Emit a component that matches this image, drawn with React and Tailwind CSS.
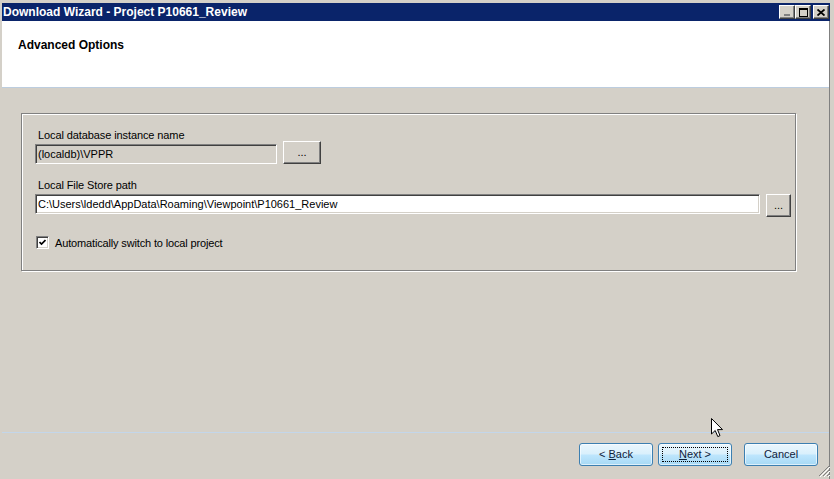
import React from "react";

const raised =
  "bg-[#d4d0c8] border border-t-white border-l-white border-b-[#404040] border-r-[#404040] shadow-[inset_-1px_-1px_0_#808080]";
const sunken =
  "border border-t-[#808080] border-l-[#808080] border-b-white border-r-white shadow-[inset_1px_1px_0_#404040,inset_-1px_-1px_0_#d4d0c8]";
const aero =
  "w-[74px] h-[23px] rounded-[3px] border border-[#3c7fb1] bg-[linear-gradient(to_bottom,#eaf6fd_0%,#d9f0fc_48%,#bee6fd_52%,#a7d9f5_100%)] shadow-[inset_0_0_0_1px_rgba(255,255,255,0.6)] flex items-center justify-center text-[11px] text-[#10213a] font-['Liberation_Sans',Arial,sans-serif]";

function TitleButton({ children, className = "" }) {
  return (
    <div className={`w-[16px] h-[14px] ${raised} flex items-center justify-center ${className}`}>
      {children}
    </div>
  );
}

export default function App() {
  return (
    <div className="w-[834px] h-[479px] bg-[#d4d0c8] relative overflow-hidden flex flex-col pt-[3px] pl-[2px] pr-[4px] font-['Liberation_Sans',Arial,sans-serif] text-black">
      {/* Title bar */}
      <div className="h-[18px] bg-[#0a246a] flex items-center justify-between pl-[1px] pr-[1px] shrink-0">
        <span className="text-white font-bold text-[12px] leading-[14px] whitespace-nowrap">
          Download Wizard - Project P10661_Review
        </span>
        <div className="flex items-center">
          <TitleButton>
            <svg width="8" height="8" viewBox="0 0 8 8">
              <rect x="1" y="6" width="6" height="2" fill="#808080" />
            </svg>
          </TitleButton>
          <TitleButton>
            <svg width="9" height="9" viewBox="0 0 9 9">
              <rect x="0.5" y="0.5" width="8" height="8" fill="none" stroke="#000" />
              <rect x="0" y="0" width="9" height="2" fill="#000" />
            </svg>
          </TitleButton>
          <TitleButton className="ml-[2px]">
            <svg width="8" height="7" viewBox="0 0 8 7">
              <path d="M0.5 0.5 L7.5 6.5 M7.5 0.5 L0.5 6.5" stroke="#000" strokeWidth="1.8" />
            </svg>
          </TitleButton>
        </div>
      </div>

      <div className="flex-1 flex flex-col border-r border-[#808080]">
        {/* Header */}
        <div className="h-[66px] bg-white pl-[16px] pt-[17px] shrink-0">
          <div className="font-bold text-[12px] leading-[14px]">Advanced Options</div>
        </div>
        <div className="h-px bg-[#bccddf] shrink-0" />

        {/* Body */}
        <div className="h-[344px] pt-[25px] pl-[19px] shrink-0">
          <div className="w-[775px] h-[158px] border border-[#808080] shadow-[1px_1px_0_#fff,inset_1px_1px_0_#fff] pt-[15px] pl-[13px] flex flex-col text-[11px] leading-[13px]">
            <div className="mb-[-1px] ml-[3px] tracking-[-0.1px]">Local database instance name</div>
            <div className="flex items-end gap-[6px]">
              <div className={`w-[242px] h-[20px] bg-[#d4d0c8] ${sunken} flex items-center pl-[2px] text-[11px]`}>
                (localdb)\VPPR
              </div>
              <div className={`w-[38px] h-[23px] ${raised} flex items-center justify-center text-[11px]`}>
                ...
              </div>
            </div>

            <div className="mt-[15px] ml-[3px] tracking-[-0.1px]">Local File Store path</div>
            <div className="flex items-start gap-[6px] mt-[2px]">
              <div className={`w-[725px] h-[20px] bg-white ${sunken} flex items-center pl-[2px] text-[11px]`}>
                C:\Users\ldedd\AppData\Roaming\Viewpoint\P10661_Review
              </div>
              <div className={`w-[25px] h-[23px] ${raised} flex items-center justify-center text-[11px]`}>
                ...
              </div>
            </div>

            <div className="flex items-center gap-[6px] mt-[18px] ml-[1px]">
              <div className={`w-[13px] h-[13px] bg-white ${sunken} flex items-center justify-center`}>
                <svg width="7" height="7" viewBox="0 0 7 7">
                  <path d="M0.5 3 L2.5 5 L6.5 1" fill="none" stroke="#000" strokeWidth="1.7" />
                </svg>
              </div>
              <span className="pt-[2px] tracking-[-0.15px]">Automatically switch to local project</span>
            </div>
          </div>
        </div>

        {/* Separator */}
        <div className="h-px bg-[#c3d6ea] shrink-0" />

        {/* Footer */}
        <div className="flex-1 flex justify-end items-start pt-[10px] pr-[11px]">
          <div className={aero}>
            &lt; <span className="underline ml-[3px]">B</span>ack
          </div>
          <div className={`${aero} ml-[5px] relative`}>
            <div className="absolute inset-[3px] border border-dotted border-[#000]" />
            <span className="underline">N</span>ext &gt;
          </div>
          <div className={`${aero} ml-[12px]`}>Cancel</div>
        </div>
      </div>

      {/* Size grip */}
      <svg className="absolute left-[818px] top-[465px]" width="12" height="12" viewBox="0 0 12 12">
        <path d="M11 1 L1 11 M11 5 L5 11 M11 9 L9 11" stroke="#808080" strokeWidth="1" />
        <path d="M12 2 L2 12 M12 6 L6 12 M12 10 L10 12" stroke="#fff" strokeWidth="1" />
      </svg>

      {/* Mouse cursor */}
      <svg className="absolute left-[711px] top-[418px]" width="13" height="20" viewBox="0 0 13 20">
        <path d="M0.5 0.5 L0.5 16 L4.2 12.5 L6.8 18.6 L9 17.6 L6.5 11.6 L11.5 11.6 Z" fill="#fff" stroke="#000" strokeWidth="1" />
      </svg>
    </div>
  );
}
